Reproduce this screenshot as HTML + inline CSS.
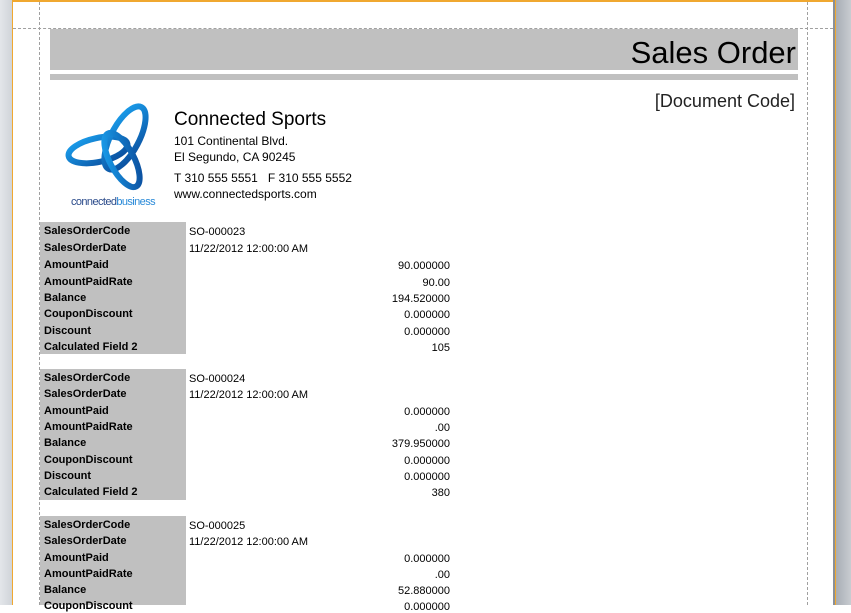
<!DOCTYPE html>
<html><head><meta charset="utf-8"><style>
body{margin:0;width:851px;height:605px;overflow:hidden;background:#fff;position:relative;font-family:"Liberation Sans",sans-serif}
.a{position:absolute}
.lbl{position:absolute;left:40px;width:146px;background:#c0c0c0}
.r{position:absolute;font-size:11px;white-space:nowrap;color:#000;margin-top:2px}
.b{font-weight:bold;left:44px}
.v{left:189px}
.n{right:401px;text-align:right}
</style></head><body>
<div class="a" style="left:0;top:0;width:12px;height:605px;background:linear-gradient(90deg,#e3e6ea,#d0d4d9)"></div>
<div class="a" style="left:12px;top:0;width:1px;height:605px;background:#f0a830"></div>
<div class="a" style="left:12px;top:0;width:824px;height:2px;background:#f0a830"></div>
<div class="a" style="left:833px;top:0;width:2px;height:605px;background:#8a9098"></div>
<div class="a" style="left:835px;top:0;width:1px;height:605px;background:#f0a830"></div>
<div class="a" style="left:836px;top:0;width:15px;height:605px;background:linear-gradient(90deg,#a9aeb5,#c8ccd1)"></div>
<div class="a" style="left:39px;top:2px;height:603px;border-left:1px dashed #a0a0a0"></div>
<div class="a" style="left:807px;top:2px;height:603px;border-left:1px dashed #a0a0a0"></div>
<div class="a" style="left:13px;top:28px;width:820px;border-top:1px dashed #a0a0a0"></div>
<div class="a" style="left:50px;top:29px;width:748px;height:41px;background:#c0c0c0"></div>
<div class="a" style="left:50px;top:74px;width:748px;height:6px;background:#c0c0c0"></div>
<div class="a" style="right:55px;top:35px;font-size:31px;line-height:36px">Sales Order</div>
<div class="a" style="right:56px;top:90px;font-size:18px;line-height:22px;color:#222">[Document Code]</div>
<svg class="a" style="left:60px;top:100px" width="110" height="110" viewBox="0 0 110 110">
<defs><linearGradient id="g" x1="0" y1="0" x2="1" y2="1"><stop offset="0" stop-color="#1aa0ee"/><stop offset="1" stop-color="#0a4a9a"/></linearGradient></defs>
<ellipse cx="38" cy="50" rx="30" ry="12" transform="rotate(-12 38 50)" fill="none" stroke="url(#g)" stroke-width="6"/>
<ellipse cx="65" cy="38" rx="14" ry="35" transform="rotate(28 65 38)" fill="none" stroke="url(#g)" stroke-width="6"/>
<ellipse cx="62" cy="60" rx="12" ry="30" transform="rotate(-28 62 60)" fill="none" stroke="url(#g)" stroke-width="6"/>
<text x="11" y="105" font-size="11" font-family="Liberation Sans" fill="#2a4a8a" letter-spacing="-0.6">connected<tspan fill="#2a8ad8">business</tspan></text>
</svg>
<div class="a" style="left:174px;top:109px;font-size:19px;line-height:22px">Connected Sports</div>
<div class="a" style="left:174px;top:133px;font-size:12px;line-height:16px">101 Continental Blvd.<br>El Segundo, CA 90245</div>
<div class="a" style="left:174px;top:170px;font-size:12px;line-height:16px">T 310 555 5551&nbsp;&nbsp; F 310 555 5552<br>www.connectedsports.com</div>

<div class="lbl" style="top:222px;height:132px"></div>
<div class="lbl" style="top:369px;height:131px"></div>
<div class="lbl" style="top:516px;height:89px"></div>

<div class="r b" style="top:223px">SalesOrderCode</div><div class="r v" style="top:224px">SO-000023</div>
<div class="r b" style="top:240px">SalesOrderDate</div><div class="r v" style="top:241px">11/22/2012 12:00:00 AM</div>
<div class="r b" style="top:257px">AmountPaid</div><div class="r n" style="top:258px">90.000000</div>
<div class="r b" style="top:274px">AmountPaidRate</div><div class="r n" style="top:275px">90.00</div>
<div class="r b" style="top:290px">Balance</div><div class="r n" style="top:291px">194.520000</div>
<div class="r b" style="top:306px">CouponDiscount</div><div class="r n" style="top:307px">0.000000</div>
<div class="r b" style="top:323px">Discount</div><div class="r n" style="top:324px">0.000000</div>
<div class="r b" style="top:339px">Calculated Field 2</div><div class="r n" style="top:340px">105</div>

<div class="r b" style="top:370px">SalesOrderCode</div><div class="r v" style="top:371px">SO-000024</div>
<div class="r b" style="top:386px">SalesOrderDate</div><div class="r v" style="top:387px">11/22/2012 12:00:00 AM</div>
<div class="r b" style="top:403px">AmountPaid</div><div class="r n" style="top:404px">0.000000</div>
<div class="r b" style="top:419px">AmountPaidRate</div><div class="r n" style="top:420px">.00</div>
<div class="r b" style="top:435px">Balance</div><div class="r n" style="top:436px">379.950000</div>
<div class="r b" style="top:452px">CouponDiscount</div><div class="r n" style="top:453px">0.000000</div>
<div class="r b" style="top:468px">Discount</div><div class="r n" style="top:469px">0.000000</div>
<div class="r b" style="top:484px">Calculated Field 2</div><div class="r n" style="top:485px">380</div>

<div class="r b" style="top:517px">SalesOrderCode</div><div class="r v" style="top:518px">SO-000025</div>
<div class="r b" style="top:533px">SalesOrderDate</div><div class="r v" style="top:534px">11/22/2012 12:00:00 AM</div>
<div class="r b" style="top:550px">AmountPaid</div><div class="r n" style="top:551px">0.000000</div>
<div class="r b" style="top:566px">AmountPaidRate</div><div class="r n" style="top:567px">.00</div>
<div class="r b" style="top:582px">Balance</div><div class="r n" style="top:583px">52.880000</div>
<div class="r b" style="top:598px">CouponDiscount</div><div class="r n" style="top:599px">0.000000</div>
</body></html>
